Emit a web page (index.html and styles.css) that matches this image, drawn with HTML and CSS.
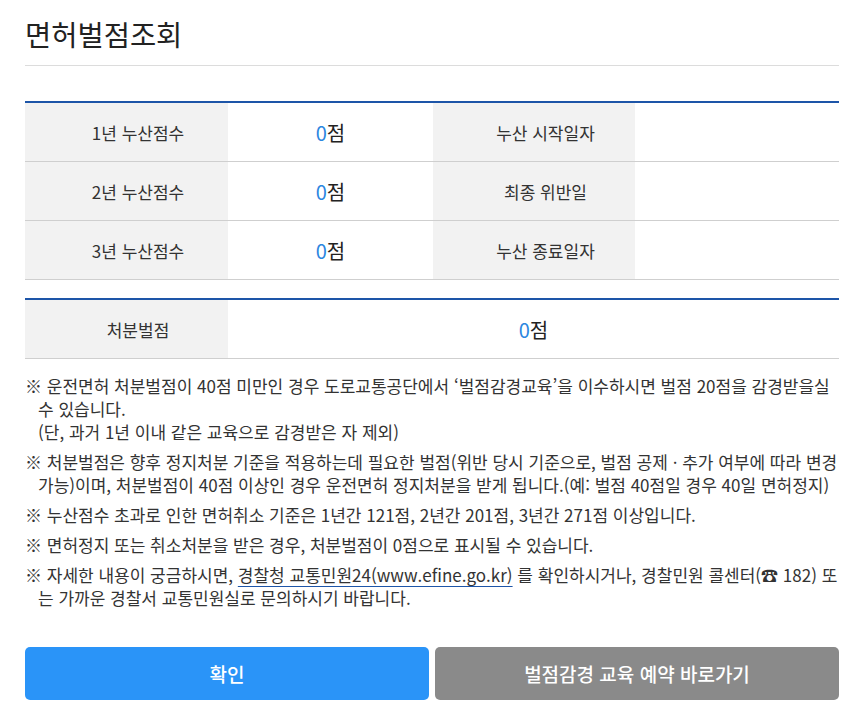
FILE: index.html
```html
<!DOCTYPE html>
<html lang="ko">
<head>
<meta charset="utf-8">
<title>면허벌점조회</title>
<link rel="stylesheet" href="styles.css">
</head>
<body>
<div class="page">
  <h1 class="title">면허벌점조회</h1>

  <div class="grid grid-4 first">
    <div class="cell label">1년 누산점수</div>
    <div class="cell value"><span class="num">0</span>점</div>
    <div class="cell label">누산 시작일자</div>
    <div class="cell value"></div>

    <div class="cell label">2년 누산점수</div>
    <div class="cell value"><span class="num">0</span>점</div>
    <div class="cell label">최종 위반일</div>
    <div class="cell value"></div>

    <div class="cell label">3년 누산점수</div>
    <div class="cell value"><span class="num">0</span>점</div>
    <div class="cell label">누산 종료일자</div>
    <div class="cell value"></div>
  </div>

  <div class="grid grid-2 second">
    <div class="cell label">처분벌점</div>
    <div class="cell value"><span class="num">0</span>점</div>
  </div>

  <ul class="notes">
    <li>※ 운전면허 처분벌점이 40점 미만인 경우 도로교통공단에서 ‘벌점감경교육’을 이수하시면 벌점 20점을 감경받을실 수 있습니다.<br>(단, 과거 1년 이내 같은 교육으로 감경받은 자 제외)</li>
    <li>※ 처분벌점은 향후 정지처분 기준을 적용하는데 필요한 벌점(위반 당시 기준으로, 벌점 공제 · 추가 여부에 따라 변경 가능)이며, 처분벌점이 40점 이상인 경우 운전면허 정지처분을 받게 됩니다.(예: 벌점 40점일 경우 40일 면허정지)</li>
    <li>※ 누산점수 초과로 인한 면허취소 기준은 1년간 121점, 2년간 201점, 3년간 271점 이상입니다.</li>
    <li>※ 면허정지 또는 취소처분을 받은 경우, 처분벌점이 0점으로 표시될 수 있습니다.</li>
    <li>※ 자세한 내용이 궁금하시면, <a class="link" href="#">경찰청 교통민원24(www.efine.go.kr)</a> 를 확인하시거나, 경찰민원 콜센터(☎ 182) 또는 가까운 경찰서 교통민원실로 문의하시기 바랍니다.</li>
  </ul>

  <div class="buttons">
    <button class="btn btn-primary" type="button">확인</button>
    <button class="btn btn-secondary" type="button">벌점감경 교육 예약 바로가기</button>
  </div>
</div>
</body>
</html>
```

FILE: styles.css
```css
html, body {
  margin: 0;
  padding: 0;
  background: #fff;
}

body {
  font-family: "Noto Sans CJK KR", "Noto Sans", sans-serif;
  color: #333;
}

.page {
  padding: 0 28px 0 25px;
}

.title {
  margin: 0;
  padding: 15px 0 12px;
  font-size: 28.5px;
  line-height: 38px;
  font-weight: 400;
  color: #222;
  border-bottom: 1px solid #dcdcdc;
}

.grid {
  display: grid;
  border-top: 2px solid #1d55a8;
}

.grid-4 {
  grid-template-columns: 203px 205px 202px 1fr;
}

.grid-2 {
  grid-template-columns: 203px 1fr;
}

.first {
  margin-top: 35px;
}

.second {
  margin-top: 18px;
}

.cell {
  height: 58px;
  display: flex;
  align-items: center;
  justify-content: center;
  border-bottom: 1px solid #cfcfcf;
}

.label {
  background: #f2f2f2;
  padding-left: 23px;
  font-size: 17px;
  color: #333;
}

.value {
  font-size: 20px;
  color: #222;
}

.num {
  color: #2b86e0;
}

.notes {
  list-style: none;
  margin: 15px 0 0;
  padding: 0;
  font-size: 17px;
  line-height: 23px;
  color: #333;
}

.notes li {
  padding-left: 13px;
  text-indent: -13px;
  margin-bottom: 7px;
}

.link {
  color: #333;
  text-decoration: underline;
  text-decoration-color: #1d55a8;
  text-decoration-thickness: 1px;
  text-underline-offset: 4px;
}

.buttons {
  display: flex;
  gap: 6px;
  margin-top: 38px;
}

.btn {
  flex: 1;
  height: 53px;
  border: 0;
  border-radius: 5px;
  font-family: "Noto Sans CJK KR", "Noto Sans", sans-serif;
  font-size: 19px;
  font-weight: 500;
  color: #fff;
  cursor: pointer;
}

.btn-primary {
  background: #2a94f8;
}

.btn-secondary {
  background: #8a8a8a;
}
```
